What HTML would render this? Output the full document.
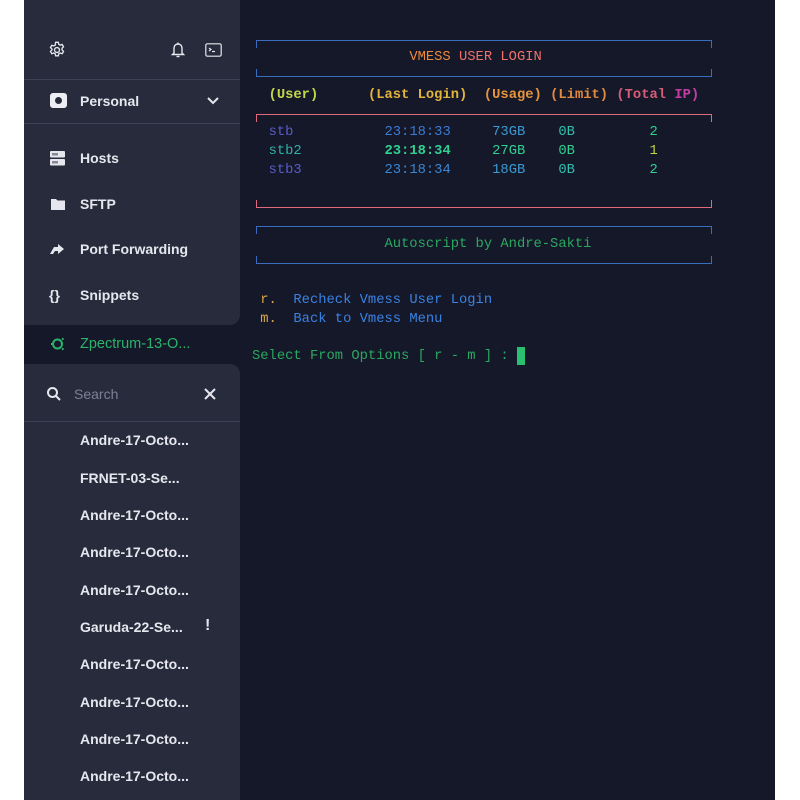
<!DOCTYPE html>
<html><head><meta charset="utf-8"><style>
*{margin:0;padding:0;box-sizing:border-box}
body{width:800px;height:800px;background:#fff;position:relative;overflow:hidden;font-family:"Liberation Sans",sans-serif}
#term{position:absolute;left:24px;top:0;width:751px;height:800px;background:#151829}
#side{position:absolute;left:24px;top:0;width:216px;height:800px}
.blk{position:absolute;left:0;width:216px;background:#282b3c}
.hr{position:absolute;left:0;width:216px;height:1px;background:#3d4155}
.it{position:absolute;left:56px;color:#e6e7ee;font-size:14px;font-weight:bold;line-height:18px;white-space:nowrap}
.ic{position:absolute}
.t{position:absolute;font-family:"Liberation Mono",monospace;font-size:13.8px;line-height:19px;white-space:pre;left:252px}
.box{position:absolute;left:256px;width:456px;height:8px}
.top{border:1.5px solid;border-bottom:none}
.bot{border:1.5px solid;border-top:none}
</style></head><body>
<div id="term"></div>
<div id="side">
  <div class="blk" style="top:0;height:325px;border-bottom-right-radius:10px"></div>
  <div style="position:absolute;left:10px;top:326px;width:206px;height:37px;background:#151829;border-radius:9px 0 0 9px"></div>
  <div class="blk" style="top:364px;height:436px;border-top-right-radius:10px"></div>
  <div class="hr" style="top:79px"></div>
  <div class="hr" style="top:123px"></div>
  <div class="hr" style="top:421px"></div>
  <svg class="ic" style="left:24px;top:41px" width="18" height="18" viewBox="0 0 16 16" fill="none" stroke="#e6e7ee" stroke-width="1.2"><path d="M6.8 1.2h2.4l.4 1.8 1.3.7 1.7-.6 1.2 2-1.3 1.3v1.6l1.3 1.3-1.2 2-1.7-.6-1.3.7-.4 1.8H6.8l-.4-1.8-1.3-.7-1.7.6-1.2-2 1.3-1.3V7.1L2.2 5.8l1.2-2 1.7.6 1.3-.7z"/><circle cx="8" cy="8" r="2.2"/></svg>
  <svg class="ic" style="left:147px;top:41px" width="14" height="18" viewBox="0 0 14 18" fill="none" stroke="#e6e7ee" stroke-width="1.4"><path d="M3 12V7a4 4 0 0 1 8 0v5l1.5 1.5h-11z"/><path d="M5.5 15.5h3"/><path d="M7 1.5v1.5"/></svg>
  <svg class="ic" style="left:181px;top:43px" width="17" height="14" viewBox="0 0 17 14" fill="none" stroke="#e6e7ee" stroke-width="1.2"><rect x="0.8" y="0.8" width="15.4" height="12.4" rx="1.5"/><path d="M4 5l2 1.5L4 8M7 8.5h3"/></svg>
  <div class="ic" style="left:26px;top:93px;width:17px;height:15px;background:#eceef3;border-radius:3px"><div style="position:absolute;left:5px;top:4px;width:7px;height:7px;border-radius:50%;background:#282b3c"></div></div>
  <div class="it" style="top:92px;left:56px">Personal</div>
  <svg class="ic" style="left:182px;top:96px" width="14" height="10" viewBox="0 0 14 10" fill="none" stroke="#e6e7ee" stroke-width="2"><path d="M2 2l5 5 5-5"/></svg>
  <svg class="ic" style="left:26px;top:151px" width="15" height="15" viewBox="0 0 15 15"><rect x="0" y="0" width="15" height="6.5" rx="1" fill="#e6e7ee"/><rect x="0" y="8" width="15" height="6.5" rx="1" fill="#e6e7ee"/><path d="M3 2v2.5M5 2v2.5M7 2v2.5M3 10v2.5M5 10v2.5M7 10v2.5" stroke="#282b3c" stroke-width="1"/></svg>
  <div class="it" style="top:149px">Hosts</div>
  <svg class="ic" style="left:27px;top:198px" width="14" height="12" viewBox="0 0 14 12"><path d="M0 1h5l1.5 1.5H14V12H0z" fill="#e6e7ee"/></svg>
  <div class="it" style="top:195px">SFTP</div>
  <svg class="ic" style="left:26px;top:243px" width="15" height="12" viewBox="0 0 15 12"><path d="M0 11L4 4h4V1l6 5-6 5V8H5l-2 3z" fill="#e6e7ee"/></svg>
  <div class="it" style="top:240px">Port Forwarding</div>
  <div class="it" style="top:286px;left:25px;font-size:14px">{}</div>
  <div class="it" style="top:286px">Snippets</div>
  <svg class="ic" style="left:26px;top:336px" width="15" height="16" viewBox="0 0 15 16" fill="none" stroke="#2bb36a" stroke-width="2"><circle cx="7.5" cy="8" r="4.5"/><path d="M12 3.5l1.5-1M12 12.5l1.5 1M1 8h2"/></svg>
  <div class="it" style="top:335px;color:#2bb36a;font-weight:normal;font-size:14.5px">Zpectrum-13-O...</div>
  <svg class="ic" style="left:22px;top:386px" width="16" height="16" viewBox="0 0 16 16" fill="none" stroke="#e6e7ee" stroke-width="2"><circle cx="6.5" cy="6.5" r="4.5"/><path d="M10 10l4 4"/></svg>
  <div class="it" style="top:385px;left:50px;color:#7c8094;font-weight:normal">Search</div>
  <svg class="ic" style="left:179px;top:387px" width="14" height="14" viewBox="0 0 14 14" stroke="#e6e7ee" stroke-width="2"><path d="M2 2l10 10M12 2L2 12"/></svg>
  <div class="it" style="top:431px">Andre-17-Octo...</div>
  <div class="it" style="top:469px">FRNET-03-Se...</div>
  <div class="it" style="top:506px">Andre-17-Octo...</div>
  <div class="it" style="top:543px">Andre-17-Octo...</div>
  <div class="it" style="top:581px">Andre-17-Octo...</div>
  <div class="it" style="top:618px">Garuda-22-Se...</div>
  <div class="it" style="top:617px;left:181px;font-size:16px">!</div>
  <div class="it" style="top:655px">Andre-17-Octo...</div>
  <div class="it" style="top:693px">Andre-17-Octo...</div>
  <div class="it" style="top:730px">Andre-17-Octo...</div>
  <div class="it" style="top:767px">Andre-17-Octo...</div>
</div>

<div class="box top" style="top:40px;border-color:#3a6cc0"></div>
<div class="box bot" style="top:69px;border-color:#3a6cc0"></div>
<div class="t" style="top:48px">                   <span style="color:#ec8a3c">VMESS</span> <span style="color:#f0706a">USER LOGIN</span></div>
<div class="t" style="top:86px;font-weight:bold">  <span style="color:#c3d64a">(User)</span>      <span style="color:#e2b43c">(Last Login)</span>  <span style="color:#e6943c">(Usage)</span> <span style="color:#e28a40">(Limit)</span> <span style="color:#d85c78">(Total </span><span style="color:#c43ea2">IP)</span></div>
<div class="box top" style="top:114px;border-color:#e06a7a"></div>
<div class="box bot" style="top:200px;border-color:#e06a7a"></div>
<div class="t" style="top:123px">  <span style="color:#5a5cc8">stb</span>           <span style="color:#3a7ad2">23:18:33</span>     <span style="color:#3a9ad2">73GB</span>    <span style="color:#30c0b0">0B</span>         <span style="color:#30d090">2</span></div>
<div class="t" style="top:142px">  <span style="color:#34b0a8">stb2</span>          <span style="color:#30d090;font-weight:bold">23:18:34</span>     <span style="color:#30d090">27GB</span>    <span style="color:#30d090">0B</span>         <span style="color:#c2d43e">1</span></div>
<div class="t" style="top:161px">  <span style="color:#5a5cc8">stb3</span>          <span style="color:#3a86d2">23:18:34</span>     <span style="color:#3a9ad2">18GB</span>    <span style="color:#30c0b0">0B</span>         <span style="color:#30d090">2</span></div>
<div class="box top" style="top:226px;border-color:#3a6cc0"></div>
<div class="box bot" style="top:256px;border-color:#3a6cc0"></div>
<div class="t" style="top:235px;color:#2aa860">                Autoscript by Andre-Sakti</div>
<div class="t" style="top:291px"> <span style="color:#d6a648">r.</span>  <span style="color:#3a82e2">Recheck Vmess User Login</span></div>
<div class="t" style="top:310px"> <span style="color:#d6a648">m.</span>  <span style="color:#3a82e2">Back to Vmess Menu</span></div>
<div class="t" style="top:347px;color:#2aa860">Select From Options [ r - m ] : </div>
<div style="position:absolute;left:517px;top:347px;width:8px;height:18px;background:#2ac070"></div>
</body></html>
